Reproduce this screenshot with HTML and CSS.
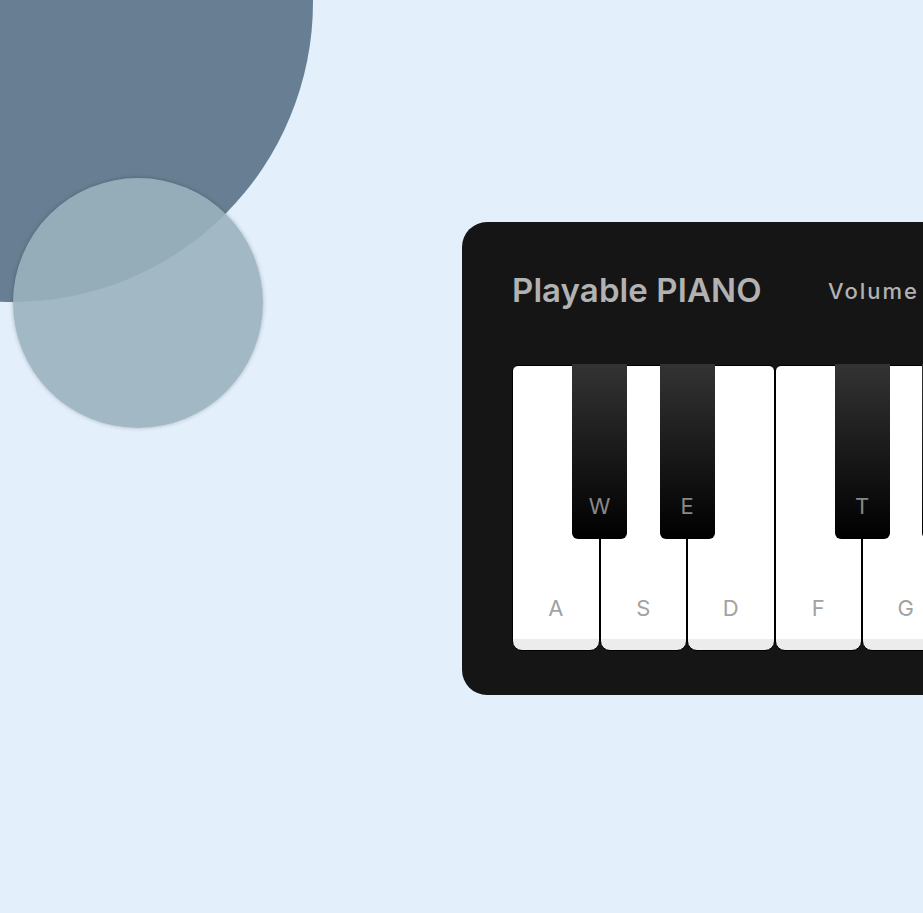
FILE: index.html
```html
<!DOCTYPE html>
<html lang="en">
<head>
<meta charset="utf-8">
<title>Playable Piano</title>
<link rel="stylesheet" href="styles.css">
</head>
<body>
<div class="blob blob-big"></div>
<div class="blob blob-small"></div>
<main class="stage">
  <section class="wrapper">
    <header class="header">
      <h2 class="title">Playable PIANO</h2>
      <div class="column volume">
        <span class="label">Volume</span>
        <div class="slider"><div class="slider-fill"></div><div class="slider-thumb"></div></div>
      </div>
      <div class="column keys-toggle">
        <span class="label">Show Keys</span>
        <div class="toggle"></div>
      </div>
    </header>
    <ul class="piano-keys">
      <li class="key white"><span>a</span></li>
      <li class="key black"><span>w</span></li>
      <li class="key white"><span>s</span></li>
      <li class="key black"><span>e</span></li>
      <li class="key white"><span>d</span></li>
      <li class="key white"><span>f</span></li>
      <li class="key black"><span>t</span></li>
      <li class="key white"><span>g</span></li>
      <li class="key black"><span>y</span></li>
      <li class="key white"><span>h</span></li>
      <li class="key black"><span>u</span></li>
      <li class="key white"><span>j</span></li>
      <li class="key white"><span>k</span></li>
      <li class="key black"><span>o</span></li>
      <li class="key white"><span>l</span></li>
      <li class="key black"><span>p</span></li>
      <li class="key white"><span>;</span></li>
    </ul>
  </section>
</main>
</body>
</html>
```
FILE: styles.css
```css
html, body {
  margin: 0;
  padding: 0;
  overflow: hidden;
}
body {
  background: #e3f0fc;
  font-family: "Inter", "Open Sans", sans-serif;
  width: 923px;
  height: 913px;
  position: relative;
}
.blob {
  position: absolute;
  border-radius: 50%;
}
.blob-big {
  left: -287px;
  top: -298px;
  width: 600px;
  height: 600px;
  background: #687f93;
}
.blob-small {
  left: 13px;
  top: 178px;
  width: 250px;
  height: 250px;
  background: rgba(154, 177, 190, 0.9);
  box-shadow: 0 0 4px rgba(0, 0, 0, 0.25);
}
.stage {
  padding: 222px 0 0 462px;
  position: relative;
  z-index: 1;
}
.wrapper {
  width: 1590px;
  box-sizing: border-box;
  padding: 44px 50px 44px;
  background: #151515;
  border-radius: 25px;
}
.header {
  display: flex;
  align-items: center;
  height: 49px;
  color: #b2b2b2;
}
.title {
  margin: 0;
  width: 316px;
  font-size: 33px;
  font-weight: 600;
  letter-spacing: 0.1px;
  color: #b2b2b2;
  position: relative;
  top: -1px;
}
.column {
  display: flex;
  align-items: center;
}
.label {
  font-size: 22px;
  font-weight: 500;
  letter-spacing: 2px;
  color: #b2b2b2;
}
.slider {
  position: relative;
  width: 125px;
  height: 6px;
  margin-left: 18px;
  background: #4b4b4b;
  border-radius: 3px;
}
.slider-fill {
  width: 60%;
  height: 100%;
  background: #fff;
  border-radius: 3px;
}
.slider-thumb {
  position: absolute;
  left: 70px;
  top: -7px;
  width: 20px;
  height: 20px;
  border-radius: 50%;
  background: #fff;
}
.keys-toggle {
  margin-left: 44px;
}
.toggle {
  width: 70px;
  height: 38px;
  margin-left: 18px;
  border-radius: 30px;
  background: #4b4b4b;
}
.piano-keys {
  display: flex;
  list-style: none;
  margin: 50px 0 0;
  padding: 0;
}
.key {
  position: relative;
  flex: none;
  box-sizing: border-box;
  text-transform: uppercase;
}
.key span {
  position: absolute;
  left: 0;
  right: 0;
  text-align: center;
  font-size: 22px;
  line-height: 1;
}
.key.white {
  width: 87.5px;
  height: 286px;
  border: 1px solid #000;
  border-radius: 6px 6px 10px 10px;
  background: linear-gradient(#fff 96%, #ececec 96%);
}
.key.white span {
  bottom: 31px;
  color: #a2a2a2;
}
.key.black {
  z-index: 2;
  width: 55px;
  height: 175px;
  margin: -1px -27.5px 0;
  border-radius: 0 0 6px 6px;
  background: linear-gradient(#333, #000);
}
.key.black span {
  bottom: 22px;
  color: #888;
}
```
